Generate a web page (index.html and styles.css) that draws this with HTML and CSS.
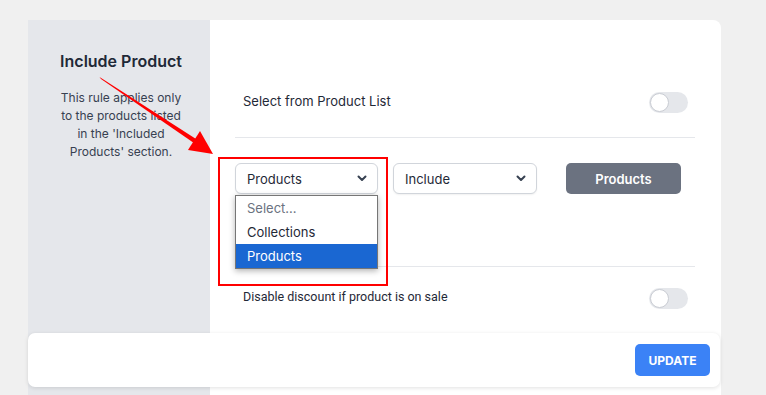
FILE: index.html
```html
<!DOCTYPE html>
<html lang="en">
<head>
    <meta charset="UTF-8">
    <meta name="viewport" content="width=device-width, initial-scale=1.0">
    <title>Include Product</title>
    <link rel="stylesheet" href="styles.css">
</head>
<body>
    <div class="page">
        <div class="rule-card">
            <aside class="rule-info">
                <h2 class="rule-title">Include Product</h2>
                <p class="rule-text">This rule applies only to the products listed in the 'Included Products' section.</p>
            </aside>

            <section class="rule-body">
                <div class="setting-row first">
                    <span class="setting-label">Select from Product List</span>
                    <span class="toggle"><span class="toggle-knob"></span></span>
                </div>

                <div class="filter-row">
                    <div class="select-wrap">
                        <div class="select">
                            <span>Products</span>
                            <svg class="chevron" width="10" height="7" viewBox="0 0 10 7"><path d="M1.5 1.5 L5 5 L8.5 1.5" fill="none" stroke="#374151" stroke-width="2" stroke-linecap="round" stroke-linejoin="round"/></svg>
                        </div>
                        <!-- open native dropdown -->
                        <ul class="select-list">
                            <li class="placeholder">Select...</li>
                            <li>Collections</li>
                            <li class="active">Products</li>
                        </ul>
                    </div>
                    <div class="select select-mode">
                        <span>Include</span>
                        <svg class="chevron" width="10" height="7" viewBox="0 0 10 7"><path d="M1.5 1.5 L5 5 L8.5 1.5" fill="none" stroke="#374151" stroke-width="2" stroke-linecap="round" stroke-linejoin="round"/></svg>
                    </div>
                    <button class="btn-products">Products</button>
                </div>

                <div class="setting-row last">
                    <span class="setting-label narrow">Disable discount if product is on sale</span>
                    <span class="toggle"><span class="toggle-knob"></span></span>
                </div>
            </section>
        </div>

        <div class="save-bar">
            <button class="btn-update">UPDATE</button>
        </div>

        <!-- annotation overlay -->
        <div class="callout-box"></div>
        <svg class="callout-arrow" width="766" height="395" viewBox="0 0 766 395">
            <polygon points="99.5,77 101,79 199,146.5 201.5,142.5" fill="#ff0000"/>
            <polygon points="213,154 200,131 188,150" fill="#ff0000"/>
        </svg>
    </div>
</body>
</html>
```

FILE: styles.css
```css
body {
    margin: 0;
    background-color: #f0f0f0;
    font-family: Inter, "Noto Sans", sans-serif;
    color: #374151;
    overflow: hidden;
}

.page {
    position: relative;
    height: 395px;
    padding: 20px 45px 0 28px;
}

.rule-card {
    display: grid;
    grid-template-columns: 182px 1fr;
    min-height: 420px;
    background-color: #fff;
    border-radius: 0 8px 0 0;
}

.rule-info {
    background-color: #e5e7eb;
    padding: 31px 26px 0 30px;
    text-align: center;
}

.rule-title {
    margin: 0;
    font-size: 16px;
    font-weight: 600;
    line-height: 20px;
    color: #1f2937;
}

.rule-text {
    margin: 18px auto 0;
    font-size: 12px;
    line-height: 18px;
    color: #374151;
}

.rule-body {
    padding: 0 26px 0 25px;
}

.setting-row {
    display: flex;
    justify-content: space-between;
    align-items: flex-start;
    padding: 0 7px 0 8px;
    box-sizing: border-box;
}

.setting-row.first {
    margin-top: 52px;
    height: 66px;
    padding-top: 20px;
    border-bottom: 1px solid #e5e7eb;
}

.setting-row.last {
    height: 80px;
    padding-top: 21px;
}

.setting-label {
    font-size: 13px;
    line-height: 18px;
    color: #1f2937;
}

.setting-label.narrow {
    font-family: Roboto, "Noto Sans", sans-serif;
    font-size: 12.5px;
}

.toggle {
    position: relative;
    width: 39px;
    height: 21px;
    border-radius: 11px;
    background-color: #e5e7eb;
}

.toggle-knob {
    position: absolute;
    left: 1px;
    top: 1px;
    width: 17px;
    height: 17px;
    border-radius: 50%;
    background-color: #fff;
    border: 1px solid #c9ccd3;
}

.filter-row {
    display: flex;
    align-items: flex-start;
    height: 129px;
    padding-top: 25px;
    box-sizing: border-box;
    border-bottom: 1px solid #e5e7eb;
}

.select-wrap {
    position: relative;
}

.select {
    display: flex;
    justify-content: space-between;
    align-items: center;
    width: 143px;
    height: 31px;
    box-sizing: border-box;
    padding: 0 10px 0 11px;
    border: 1px solid #d1d5db;
    border-radius: 6px;
    background-color: #fff;
    font-size: 13px;
    color: #1f2937;
    box-shadow: 0 1px 2px rgba(0, 0, 0, 0.06);
}

.select-mode {
    margin-left: 15px;
    width: 144px;
}

.select-list {
    position: absolute;
    left: 0;
    top: 32px;
    z-index: 2;
    width: 143px;
    box-sizing: border-box;
    margin: 0;
    padding: 0;
    list-style: none;
    background-color: #fff;
    border: 1px solid #767676;
    box-shadow: 0 2px 6px rgba(0, 0, 0, 0.3);
}

.select-list li {
    height: 24px;
    line-height: 24px;
    padding-left: 11px;
    font-size: 13px;
    color: #1f2937;
}

.select-list .placeholder {
    color: #6b7280;
}

.select-list .active {
    background-color: #1a67d2;
    color: #fff;
}

.btn-products {
    margin-left: 29px;
    width: 115px;
    height: 31px;
    border: none;
    border-radius: 5px;
    background-color: #6b7280;
    color: #fff;
    font-family: inherit;
    font-size: 13px;
    font-weight: 600;
}

.save-bar {
    position: absolute;
    left: 28px;
    top: 333px;
    width: 692px;
    height: 54px;
    box-sizing: border-box;
    display: flex;
    justify-content: flex-end;
    align-items: center;
    padding-right: 10px;
    background-color: #fff;
    border-radius: 7px;
    box-shadow: 0 1px 4px rgba(0, 0, 0, 0.12);
    z-index: 3;
}

.btn-update {
    width: 75px;
    height: 32px;
    border: none;
    border-radius: 5px;
    background-color: #3b82f6;
    color: #fff;
    font-family: inherit;
    font-size: 12px;
    font-weight: 700;
}

.callout-box {
    position: absolute;
    left: 218px;
    top: 157px;
    width: 166px;
    height: 125px;
    border: 2px solid #ff0000;
    z-index: 4;
}

.callout-arrow {
    position: absolute;
    left: 0;
    top: 0;
    z-index: 4;
}
```
